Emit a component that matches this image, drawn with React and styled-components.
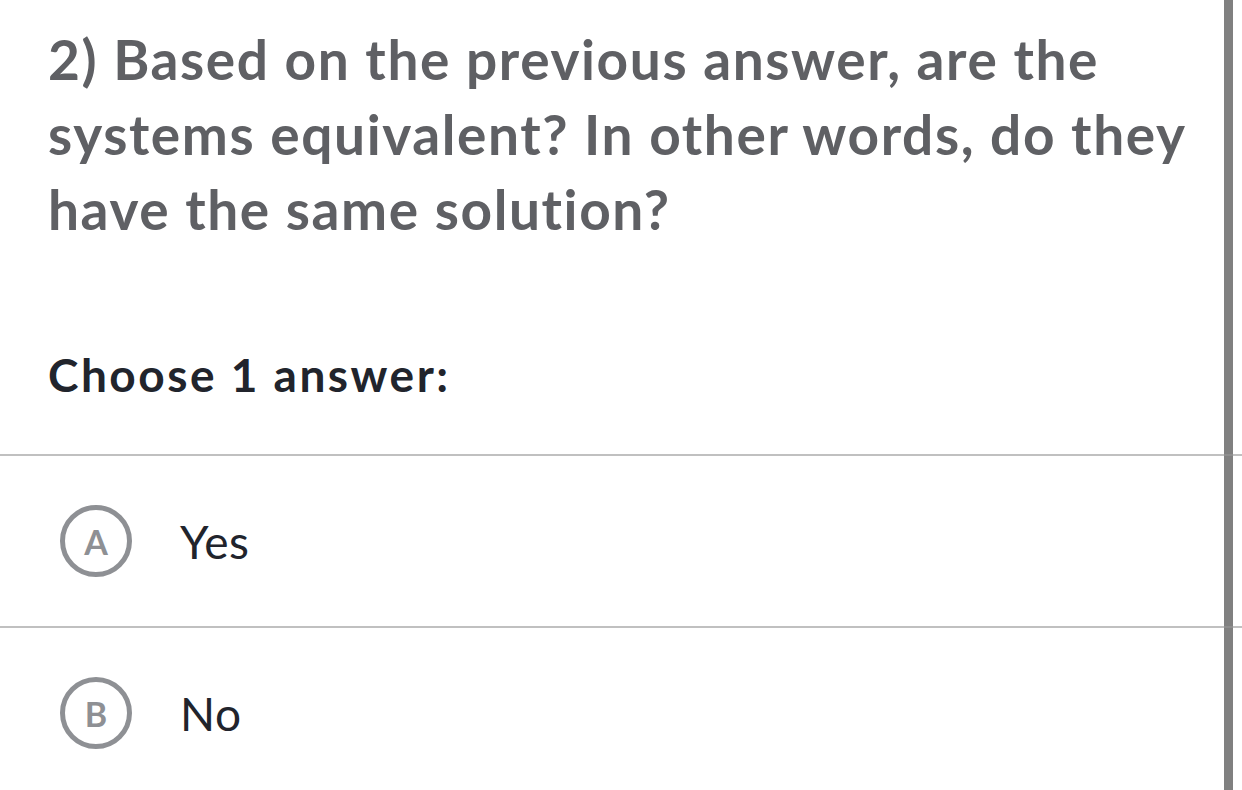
import React from 'react'
import styled, { createGlobalStyle } from 'styled-components'

const GlobalStyle = createGlobalStyle`
html, body {
    margin: 0;
    padding: 0;
    background: #ffffff;
    overflow: hidden;
}
body {
    font-family: Lato, "Open Sans", "Liberation Sans", sans-serif;
}
`

const Page = styled.div`
width: 1242px;
height: 790px;
overflow: hidden;
position: relative;
`

// scrollbar thumb lying over the right edge
const ScrollThumb = styled.div`
position: absolute;
top: 0;
bottom: 0;
left: 1224px;
width: 9px;
background: #808080;
`

const Question = styled.h2`
margin: 0;
padding: 22px 16px 0 48px;
font-size: 55px;
line-height: 75px;
font-weight: 700;
letter-spacing: 1.6px;
color: #5f6064;
`

const Prompt = styled.p`
margin: 0;
padding: 98px 48px 0 48px;
font-size: 46px;
line-height: 60px;
font-weight: 700;
letter-spacing: 2.5px;
color: #21242c;
`

const Choices = styled.div`
margin-top: 49px;
display: flex;
flex-direction: column;
`

const Choice = styled.div`
position: relative;
z-index: 1;
height: 170px;
border-top: 2px solid rgba(150, 150, 150, 0.6);
display: flex;
align-items: center;
padding-left: 60px;
gap: 48px;
`

const Letter = styled.div`
box-sizing: border-box;
width: 72px;
height: 72px;
border: 5px solid #8e9094;
border-radius: 50%;
display: flex;
align-items: center;
justify-content: center;
font-size: 34px;
font-weight: 700;
color: #8e9094;
`

const Label = styled.span`
font-size: 46px;
font-weight: 400;
letter-spacing: 0.5px;
color: #21242c;
`

const choices = [
    { key: 'A', text: 'Yes' },
    { key: 'B', text: 'No' },
]

const App = () => {
    return (
        <Page>
            <GlobalStyle />
            <ScrollThumb />
            <Question>
                2) Based on the previous answer, are the systems equivalent? In other words, do they have the same solution?
            </Question>
            <Prompt>Choose 1 answer:</Prompt>
            <Choices>
                {choices.map((c) => (
                    <Choice key={c.key}>
                        <Letter>{c.key}</Letter>
                        <Label>{c.text}</Label>
                    </Choice>
                ))}
            </Choices>
        </Page>
    )
}

export default App
